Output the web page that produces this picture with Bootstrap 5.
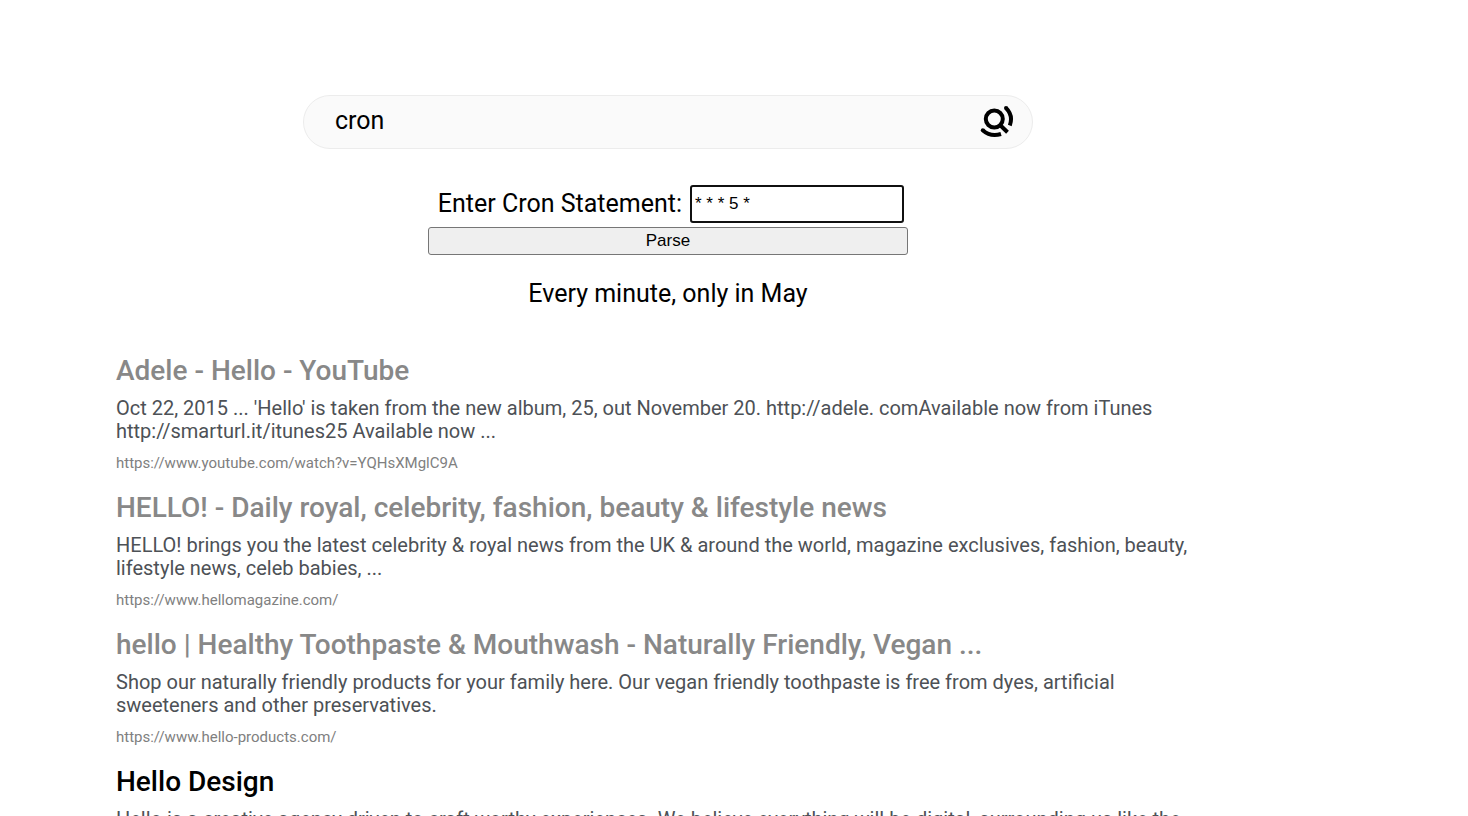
<!DOCTYPE html>
<html lang="en">
<head>
<meta charset="utf-8">
<meta name="viewport" content="width=device-width, initial-scale=1">
<title>cron</title>
<link href="https://cdn.jsdelivr.net/npm/bootstrap@5.3.0/dist/css/bootstrap.min.css" rel="stylesheet">
<style>
body { font-family: Bahnschrift, Roboto, sans-serif; color: #000; background: #fff; height: 100vh; overflow: hidden; }
.page { margin-left: 116px; max-width: 1104px; padding-top: 95px; }
.search-bar { width: 730px; max-width: 100%; height: 54px; background: #fafafa; border: 1px solid #ececec; }
.search-bar input { font-size: 25px; line-height: 30px; padding: 0 0 2px 31px; outline: 0; color: #000; }
.search-bar button { margin-right: 18px; }
.cron-form { width: 480px; max-width: 100%; margin-top: 36px; }
.cron-form label, .cron-out { font-size: 25px; line-height: 30px; }
.cron-form input { width: 214px; height: 38px; border: 2px solid #101010; border-radius: 3px; font: 17px "Liberation Sans", Arial, sans-serif; padding: 1px 3px; outline: 0; }
.cron-form button { height: 28px; border: 1px solid #767676; border-radius: 3px; background: #efefef; color: #000; font: 17px "Liberation Sans", Arial, sans-serif; }
.cron-out { margin: 24px 0 45px; }
.result { margin-bottom: 18px; }
.result h2 { font-size: 28px; line-height: 34px; font-weight: 500; margin: 0 0 9px; }
.result h2 a { color: #000; }
.result.seen h2 a { color: #888; }
.result p { font-size: 20px; line-height: 23px; color: #4d5156; margin: 0 0 10px; }
.result cite { font-size: 15px; line-height: 20px; color: #808080; font-style: normal; }
</style>
</head>
<body>
<main class="page">
  <form class="search-bar rounded-pill d-flex align-items-center mx-auto" role="search">
    <input class="flex-grow-1 border-0 bg-transparent" type="text" value="cron" aria-label="Search text">
    <button type="button" class="border-0 bg-transparent p-0 d-flex" aria-label="Search">
      <svg width="34" height="34" viewBox="0 0 34 34" fill="none" stroke="#000" stroke-width="4">
        <circle cx="14.300" cy="14" r="8.500"/>
        <path d="M20 20L27.500 27.200"/>
        <path d="M26 3Q33.500 10.500 29.800 20.500"/>
        <path d="M2.800 25.200Q10.500 32.300 21 29"/>
        <g fill="#000" stroke="none"><circle cx="26" cy="3" r="2"/><circle cx="2.800" cy="25.200" r="2"/></g>
      </svg>
    </button>
  </form>
  <form class="cron-form mx-auto d-flex flex-column gap-1">
    <div class="d-flex justify-content-end align-items-center gap-2 pe-1">
      <label for="cron">Enter Cron Statement:</label>
      <input id="cron" type="text" value="* * * 5 *">
    </div>
    <button type="button" class="w-100 p-0">Parse</button>
  </form>
  <p class="cron-out text-center">Every minute, only in May</p>
  <article class="result seen">
    <h2><a class="text-decoration-none" href="#">Adele - Hello - YouTube</a></h2>
    <p>Oct 22, 2015 ... 'Hello' is taken from the new album, 25, out November 20. http://adele. comAvailable now from iTunes http://smarturl.it/itunes25 Available now ...</p>
    <cite class="d-block">https://www.youtube.com/watch?v=YQHsXMglC9A</cite>
  </article>
  <article class="result seen">
    <h2><a class="text-decoration-none" href="#">HELLO! - Daily royal, celebrity, fashion, beauty &amp; lifestyle news</a></h2>
    <p>HELLO! brings you the latest celebrity &amp; royal news from the UK &amp; around the world, magazine exclusives, fashion, beauty, lifestyle news, celeb babies, ...</p>
    <cite class="d-block">https://www.hellomagazine.com/</cite>
  </article>
  <article class="result seen">
    <h2><a class="text-decoration-none" href="#">hello | Healthy Toothpaste &amp; Mouthwash - Naturally Friendly, Vegan ...</a></h2>
    <p>Shop our naturally friendly products for your family here. Our vegan friendly toothpaste is free from dyes, artificial sweeteners and other preservatives.</p>
    <cite class="d-block">https://www.hello-products.com/</cite>
  </article>
  <article class="result">
    <h2><a class="text-decoration-none" href="#">Hello Design</a></h2>
    <p>Hello is a creative agency driven to craft worthy experiences. We believe everything will be digital, surrounding us like the</p>
  </article>
</main>
<script src="https://cdn.jsdelivr.net/npm/bootstrap@5.3.0/dist/js/bootstrap.bundle.min.js"></script>
</body>
</html>
